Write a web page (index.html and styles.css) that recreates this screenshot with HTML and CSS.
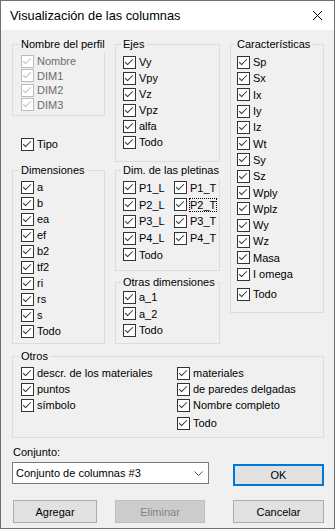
FILE: index.html
```html
<!DOCTYPE html>
<html lang="es">
<head>
  <meta charset="UTF-8">
  <meta name="viewport" content="width=device-width, initial-scale=1.0">
  <title>Visualización de las columnas</title>
  <link rel="stylesheet" href="styles.css">
</head>
<body>
  <div class="window">
    <div class="titlebar">
      <span class="title">Visualización de las columnas</span>
      <svg class="close" width="9" height="9" viewBox="0 0 9 9"><path d="M0 0L9 9M9 0L0 9"/></svg>
    </div>

    <div class="dialog">
      <div class="columns">
        <!-- columna izquierda -->
        <div class="col">
          <div class="group g-nombre">
            <div class="gtitle">Nombre del perfil</div>
            <div class="items">
              <label class="chk dis"><span class="cb"></span>Nombre</label>
              <label class="chk dis"><span class="cb"></span>DIM1</label>
              <label class="chk dis"><span class="cb"></span>DIM2</label>
              <label class="chk dis"><span class="cb"></span>DIM3</label>
            </div>
          </div>

          <label class="chk tipo"><span class="cb"></span>Tipo</label>

          <div class="group g-dim">
            <div class="gtitle">Dimensiones</div>
            <div class="items">
              <label class="chk"><span class="cb"></span>a</label>
              <label class="chk"><span class="cb"></span>b</label>
              <label class="chk"><span class="cb"></span>ea</label>
              <label class="chk"><span class="cb"></span>ef</label>
              <label class="chk"><span class="cb"></span>b2</label>
              <label class="chk"><span class="cb"></span>tf2</label>
              <label class="chk"><span class="cb"></span>ri</label>
              <label class="chk"><span class="cb"></span>rs</label>
              <label class="chk"><span class="cb"></span>s</label>
              <label class="chk"><span class="cb"></span>Todo</label>
            </div>
          </div>
        </div>

        <!-- columna central -->
        <div class="col">
          <div class="group g-ejes">
            <div class="gtitle">Ejes</div>
            <div class="items">
              <label class="chk"><span class="cb"></span>Vy</label>
              <label class="chk"><span class="cb"></span>Vpy</label>
              <label class="chk"><span class="cb"></span>Vz</label>
              <label class="chk"><span class="cb"></span>Vpz</label>
              <label class="chk"><span class="cb"></span>alfa</label>
              <label class="chk"><span class="cb"></span>Todo</label>
            </div>
          </div>

          <div class="group g-plet">
            <div class="gtitle">Dim. de las pletinas</div>
            <div class="items plet-grid">
              <label class="chk"><span class="cb"></span>P1_L</label>
              <label class="chk"><span class="cb"></span>P1_T</label>
              <label class="chk"><span class="cb"></span>P2_L</label>
              <label class="chk"><span class="cb"></span><span class="focus">P2_T</span></label>
              <label class="chk"><span class="cb"></span>P3_L</label>
              <label class="chk"><span class="cb"></span>P3_T</label>
              <label class="chk"><span class="cb"></span>P4_L</label>
              <label class="chk"><span class="cb"></span>P4_T</label>
              <label class="chk"><span class="cb"></span>Todo</label>
            </div>
          </div>

          <div class="group g-otras">
            <div class="gtitle">Otras dimensiones</div>
            <div class="items">
              <label class="chk"><span class="cb"></span>a_1</label>
              <label class="chk"><span class="cb"></span>a_2</label>
              <label class="chk"><span class="cb"></span>Todo</label>
            </div>
          </div>
        </div>

        <!-- columna derecha -->
        <div class="col">
          <div class="group g-carac">
            <div class="gtitle">Características</div>
            <div class="items">
              <label class="chk"><span class="cb"></span>Sp</label>
              <label class="chk"><span class="cb"></span>Sx</label>
              <label class="chk"><span class="cb"></span>Ix</label>
              <label class="chk"><span class="cb"></span>Iy</label>
              <label class="chk"><span class="cb"></span>Iz</label>
              <label class="chk"><span class="cb"></span>Wt</label>
              <label class="chk"><span class="cb"></span>Sy</label>
              <label class="chk"><span class="cb"></span>Sz</label>
              <label class="chk"><span class="cb"></span>Wply</label>
              <label class="chk"><span class="cb"></span>Wplz</label>
              <label class="chk"><span class="cb"></span>Wy</label>
              <label class="chk"><span class="cb"></span>Wz</label>
              <label class="chk"><span class="cb"></span>Masa</label>
              <label class="chk"><span class="cb"></span>I omega</label>
              <label class="chk todo"><span class="cb"></span>Todo</label>
            </div>
          </div>
        </div>
      </div>

      <div class="group g-otros">
        <div class="gtitle">Otros</div>
        <div class="items otros-cols">
          <div class="otros-col">
            <label class="chk"><span class="cb"></span>descr. de los materiales</label>
            <label class="chk"><span class="cb"></span>puntos</label>
            <label class="chk"><span class="cb"></span>símbolo</label>
          </div>
          <div class="otros-col">
            <label class="chk"><span class="cb"></span>materiales</label>
            <label class="chk"><span class="cb"></span>de paredes delgadas</label>
            <label class="chk"><span class="cb"></span>Nombre completo</label>
            <label class="chk todo"><span class="cb"></span>Todo</label>
          </div>
        </div>
      </div>

      <div class="conj-label">Conjunto:</div>
      <div class="conj-row">
        <div class="select">
          <span>Conjunto de columnas #3</span>
          <svg class="chev" width="9" height="5" viewBox="0 0 9 5"><path d="M0.5 0.5L4.5 4.5L8.5 0.5"/></svg>
        </div>
        <button class="btn btn-ok">OK</button>
      </div>

      <div class="btn-row">
        <button class="btn btn-add">Agregar</button>
        <button class="btn btn-del" disabled>Eliminar</button>
        <button class="btn btn-cancel">Cancelar</button>
      </div>
    </div>
  </div>
</body>
</html>
```

FILE: styles.css
```css
* {
  box-sizing: border-box;
}
body {
  margin: 0;
  font-family: "Liberation Sans", Arial, sans-serif;
  font-size: 11px;
  color: #000;
  background: #f0f0f0;
}
.window {
  width: 335px;
  height: 529px;
  border: 1px solid #707070;
  background: #f0f0f0;
}
.titlebar {
  height: 29px;
  background: #fff;
  display: flex;
  align-items: center;
  justify-content: space-between;
  padding: 0 12px 0 9px;
}
.title {
  font-size: 12.8px;
}
.close {
  stroke: #000;
  stroke-width: 1;
  fill: none;
}
.dialog {
  padding: 14px 10px 0 11px;
}
.columns {
  display: grid;
  grid-template-columns: 93px 105px 94px;
  column-gap: 10px;
  align-items: start;
}
.col {
  display: flex;
  flex-direction: column;
}

/* group box */
.group {
  border: 1px solid #dcdcdc;
  padding-left: 8px;
}
.gtitle {
  width: max-content;
  margin: -8px 0 0 -2px;
  padding: 0 2px;
  line-height: 15px;
  background: #f0f0f0;
}
.items {
  padding-top: 2px;
}
.chk {
  display: flex;
  align-items: center;
  gap: 3px;
  height: 16px;
  white-space: nowrap;
}
.cb {
  position: relative;
  flex: none;
  width: 13px;
  height: 13px;
  border: 1px solid #333;
  background: #fff;
}
.cb::after {
  content: "";
  position: absolute;
  left: 3px;
  top: 0;
  width: 3px;
  height: 7px;
  border: solid #333;
  border-width: 0 1px 1px 0;
  transform: rotate(45deg);
}
.chk.dis {
  color: #6d6d6d;
}
.chk.dis .cb {
  border-color: #bcbcbc;
}
.chk.dis .cb::after {
  border-color: #bcbcbc;
}
.focus {
  outline: 1px dotted #000;
  outline-offset: 0;
  line-height: 12px;
}

/* columna izquierda */
.g-nombre {
  height: 72px;
}
.g-nombre .chk {
  height: 14.5px;
}
.tipo {
  margin: 20px 0 0 9px;
}
.g-dim {
  height: 174px;
  margin-top: 18px;
}
.g-dim .items {
  padding-top: 1px;
}

/* columna central */
.g-ejes,
.g-plet,
.g-otras {
  padding-left: 7px;
}
.g-ejes {
  height: 118px;
}
.g-plet {
  height: 101px;
  margin-top: 8px;
}
.plet-grid {
  display: grid;
  grid-template-columns: 51px 1fr;
  padding-top: 1.6px;
}
.plet-grid .chk {
  height: 16.7px;
}
.g-otras {
  height: 62px;
  margin-top: 11px;
}
.g-otras .items {
  padding-top: 0;
  margin-top: -1px;
}
.g-otras .chk {
  height: 16.5px;
}

/* columna derecha */
.g-carac {
  height: 269px;
  padding-left: 6px;
}
.g-carac .chk {
  height: 16.3px;
}
.g-carac .todo {
  margin-top: 4px;
}

/* otros */
.g-otros {
  height: 82px;
  margin-top: 12px;
}
.otros-cols {
  display: grid;
  grid-template-columns: 156px 1fr;
  padding-top: 1px;
}
.otros-col .todo {
  margin-top: 2px;
}

/* conjunto */
.conj-label {
  margin-top: 7px;
  line-height: 15px;
  padding-left: 1px;
}
.conj-row {
  display: flex;
  justify-content: space-between;
  align-items: flex-start;
  margin-top: 2px;
}
.select {
  width: 197px;
  height: 22px;
  border: 1px solid #7a7a7a;
  background: #fff;
  display: flex;
  align-items: center;
  justify-content: space-between;
  padding: 0 5px 0 3px;
}
.chev {
  stroke: #555;
  stroke-width: 1;
  fill: none;
}
.btn {
  height: 23px;
  padding: 0;
  border: 1px solid #adadad;
  background: #e1e1e1;
  font: inherit;
  color: #000;
}
.btn-ok {
  width: 91px;
  height: 22px;
  margin-top: 2px;
  border: 2px solid #0078d7;
}
.btn-row {
  display: flex;
  margin-top: 14px;
}
.btn-add {
  width: 84px;
  margin-left: 1px;
}
.btn-del {
  width: 90px;
  margin-left: 18px;
  background: #cccccc;
  border-color: #bfbfbf;
  color: #838383;
}
.btn-cancel {
  width: 91px;
  margin-left: auto;
}
```
